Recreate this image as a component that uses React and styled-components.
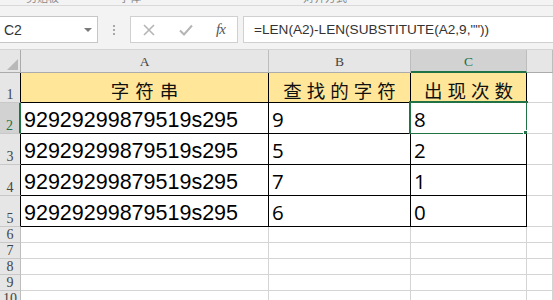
import styled, { createGlobalStyle } from 'styled-components';

const GlobalStyle = createGlobalStyle`
  html, body {
    margin: 0;
    padding: 0;
    background: #ffffff;
    overflow: hidden;
  }
`;

const Window = styled.div`
  width: 553px;
  height: 300px;
  overflow: hidden;
  display: flex;
  flex-direction: column;
  background: #ffffff;
  font-family: 'Liberation Sans', 'Noto Sans CJK SC', sans-serif;
`;

const RibbonEdge = styled.div`
  height: 5px;
  flex: none;
  background: #f3f3f3;
  border-bottom: 1px solid #d9d9d9;
  display: flex;
  align-items: flex-end;
  overflow: hidden;
`;

const RibbonLabel = styled.span`
  flex: none;
  margin-left: ${(p) => p.$left}px;
  margin-bottom: 2px;
  font-family: 'Noto Sans CJK SC', sans-serif;
  font-size: 11px;
  line-height: 11px;
  color: #8a8a8a;
`;

const FormulaBar = styled.div`
  height: 44px;
  flex: none;
  box-sizing: border-box;
  background: #f3f3f3;
  border-bottom: 1px solid #d4d4d4;
  padding-top: 10px;
  display: flex;
  align-items: flex-start;
`;

const NameBox = styled.div`
  width: 98px;
  height: 27px;
  box-sizing: border-box;
  background: #ffffff;
  border: 1px solid #c6c6c6;
  border-left: none;
  display: flex;
  align-items: center;
  justify-content: space-between;
  padding: 0 5px 0 4px;
  font-size: 14px;
  color: #333333;
`;

const Caret = styled.span`
  width: 0;
  height: 0;
  border-left: 4px solid transparent;
  border-right: 4px solid transparent;
  border-top: 4px solid #7a7a7a;
`;

const Grip = styled.div`
  width: 32px;
  height: 27px;
  display: flex;
  flex-direction: column;
  align-items: center;
  justify-content: center;
  gap: 2px;
`;

const Dot = styled.span`
  width: 2px;
  height: 2px;
  background: #a8a8a8;
`;

const ButtonBox = styled.div`
  width: 108px;
  height: 27px;
  box-sizing: border-box;
  background: #ffffff;
  border: 1px solid #d0d0d0;
  display: grid;
  grid-template-columns: 36px 37px 1fr;
  align-items: center;
  justify-items: center;
`;

const Fx = styled.span`
  font-family: 'Liberation Serif', serif;
  font-style: italic;
  font-size: 15px;
  color: #555555;
  letter-spacing: -1px;
`;

const FormulaInput = styled.div`
  flex: 1;
  margin-left: 5px;
  height: 27px;
  box-sizing: border-box;
  background: #ffffff;
  border: 1px solid #d0d0d0;
  border-right: none;
  display: flex;
  align-items: center;
  padding-left: 10px;
  font-family: 'Liberation Sans', sans-serif;
  font-size: 13.6px;
  color: #333333;
  white-space: nowrap;
`;

const Sheet = styled.div`
  display: grid;
  grid-template-columns: 21px 248px 142px 116px 1fr;
  grid-template-rows: 23px 30px 31px 31px 31px 31px repeat(5, 16px);
`;

const Corner = styled.div`
  box-sizing: border-box;
  background: #e6e6e6;
  border-right: 1px solid #ababab;
  border-bottom: 1px solid #ababab;
  display: flex;
  align-items: flex-end;
  justify-content: flex-end;
  padding: 0 2px 2px 0;
`;

const CornerMark = styled.span`
  width: 0;
  height: 0;
  border-left: 11px solid transparent;
  border-bottom: 11px solid #b8b8b8;
`;

const ColHead = styled.div`
  box-sizing: border-box;
  background: ${(p) => (p.$active ? '#d2d2d2' : '#e6e6e6')};
  border-right: 1px solid #bdbdbd;
  border-bottom: ${(p) => (p.$active ? '2px solid #217346' : '1px solid #ababab')};
  display: flex;
  align-items: flex-end;
  justify-content: center;
  font-family: 'Liberation Serif', serif;
  font-size: 13.5px;
  line-height: 16px;
  padding-bottom: ${(p) => (p.$active ? '1px' : '2px')};
  color: ${(p) => (p.$active ? '#217346' : '#444444')};
`;

const RowHead = styled.div`
  box-sizing: border-box;
  background: ${(p) => (p.$active ? '#d2d2d2' : '#e6e6e6')};
  border-right: ${(p) => (p.$active ? '2px solid #217346' : `1px solid ${p.$edge || '#bdbdbd'}`)};
  border-bottom: 1px solid #c8c8c8;
  display: flex;
  align-items: flex-end;
  justify-content: center;
  font-family: 'Liberation Serif', serif;
  font-size: 14px;
  line-height: 15px;
  color: ${(p) => (p.$active ? '#217346' : '#444444')};
  overflow: hidden;
`;

const Cell = styled.div`
  position: relative;
  box-sizing: border-box;
  min-width: 0;
  background: ${(p) => p.$bg || '#ffffff'};
  border-right: 1px solid ${(p) => (p.$table ? '#000000' : '#d4d4d4')};
  border-bottom: 1px solid ${(p) => (p.$table ? '#000000' : '#d4d4d4')};
  display: flex;
  align-items: flex-end;
  justify-content: ${(p) => (p.$center ? 'center' : 'flex-start')};
  padding-left: ${(p) => (p.$center ? '0' : '3px')};
  white-space: nowrap;
  overflow: visible;
`;

const Title = styled.span`
  font-family: 'Noto Sans CJK SC', sans-serif;
  font-size: 18.5px;
  line-height: 24px;
  letter-spacing: ${(p) => p.$spacing}px;
  margin-right: -${(p) => p.$spacing}px;
  color: #111111;
`;

const LongText = styled.span`
  font-family: 'Liberation Sans', sans-serif;
  font-size: 21.5px;
  line-height: 25px;
  color: #000000;
`;

const Num = styled.span`
  font-family: 'Open Sans', sans-serif;
  font-size: 20.5px;
  line-height: 27px;
  color: #000000;
`;

const Selection = styled.div`
  position: absolute;
  left: -2px;
  top: -2px;
  right: -2px;
  bottom: -2px;
  border: 2px solid #217346;
  pointer-events: none;

  &::after {
    content: '';
    position: absolute;
    right: -4px;
    bottom: -4px;
    width: 5px;
    height: 5px;
    background: #217346;
    border: 1px solid #ffffff;
  }
`;

const Xmark = () => (
  <svg width="14" height="14" viewBox="0 0 14 14">
    <path d="M2 2 L12 12 M12 2 L2 12" stroke="#b5b5b5" strokeWidth="1.6" fill="none" />
  </svg>
);

const Check = () => (
  <svg width="16" height="14" viewBox="0 0 16 14">
    <path d="M2 7.5 L6 11.5 L14 2.5" stroke="#b5b5b5" strokeWidth="2" fill="none" />
  </svg>
);

const rows = [
  { a: '92929299879519s295', b: '9', c: '8' },
  { a: '92929299879519s295', b: '5', c: '2' },
  { a: '92929299879519s295', b: '7', c: '1' },
  { a: '92929299879519s295', b: '6', c: '0' },
];

export default function App() {
  return (
    <>
      <GlobalStyle />
      <Window>
        <RibbonEdge>
          <RibbonLabel $left={26}>剪贴板</RibbonLabel>
          <RibbonLabel $left={60}>字体</RibbonLabel>
          <RibbonLabel $left={162}>对齐方式</RibbonLabel>
        </RibbonEdge>
        <FormulaBar>
          <NameBox>
            C2
            <Caret />
          </NameBox>
          <Grip>
            <Dot />
            <Dot />
            <Dot />
          </Grip>
          <ButtonBox>
            <Xmark />
            <Check />
            <Fx>fx</Fx>
          </ButtonBox>
          <FormulaInput>=LEN(A2)-LEN(SUBSTITUTE(A2,9,""))</FormulaInput>
        </FormulaBar>
        <Sheet>
          <Corner>
            <CornerMark />
          </Corner>
          <ColHead>A</ColHead>
          <ColHead>B</ColHead>
          <ColHead $active>C</ColHead>
          <ColHead />

          <RowHead $edge="#000000">1</RowHead>
          <Cell $table $bg="#ffe699" $center>
            <Title $spacing={6}>字符串</Title>
          </Cell>
          <Cell $table $bg="#ffe699" $center>
            <Title $spacing={5}>查找的字符</Title>
          </Cell>
          <Cell $table $bg="#ffe699" $center>
            <Title $spacing={5}>出现次数</Title>
          </Cell>
          <Cell />

          {rows.map((r, i) => (
            <Row key={i} n={i + 2} row={r} />
          ))}

          {[6, 7, 8, 9, 10].map((n) => (
            <Blank key={n} n={n} />
          ))}
        </Sheet>
      </Window>
    </>
  );
}

function Row({ n, row }) {
  const active = n === 2;
  return (
    <>
      <RowHead $active={active} $edge="#000000">
        {n}
      </RowHead>
      <Cell $table>
        <LongText>{row.a}</LongText>
      </Cell>
      <Cell $table>
        <Num>{row.b}</Num>
      </Cell>
      <Cell $table>
        <Num>{row.c}</Num>
        {active && <Selection />}
      </Cell>
      <Cell />
    </>
  );
}

function Blank({ n }) {
  return (
    <>
      <RowHead>{n}</RowHead>
      <Cell />
      <Cell />
      <Cell />
      <Cell />
    </>
  );
}
